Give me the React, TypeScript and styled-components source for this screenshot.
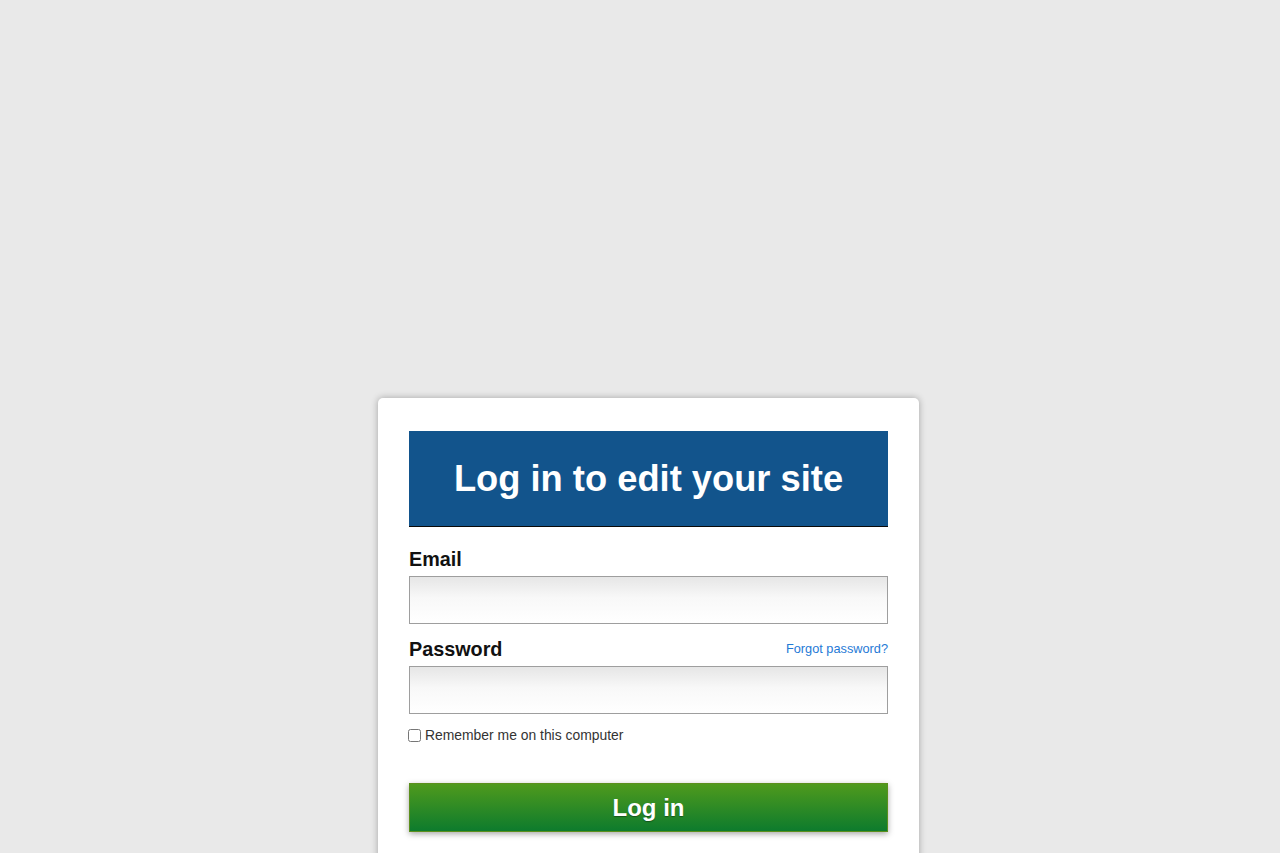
import React from "react";
import styled, { createGlobalStyle } from "styled-components";

const Global = createGlobalStyle`
  html, body { margin: 0; padding: 0; background: #e9e9e9; }
  body { font-family: "Liberation Sans", Arial, sans-serif; height: 853px; overflow: hidden; }
`;

const Page = styled.div`
  padding: 398px 0 0 17px;
  display: flex;
  justify-content: center;
`;

const Card = styled.div`
  width: 479px;
  background: #fff;
  border-radius: 5px;
  box-shadow: 0 0 7px rgba(0, 0, 0, 0.3);
  padding: 33px 31px 40px;
`;

const Header = styled.h1`
  margin: 0;
  height: 95px;
  background: #12548c;
  border-bottom: 1px solid #0a0a0a;
  color: #fff;
  font-size: 36.3px;
  font-weight: bold;
  display: flex;
  align-items: center;
  justify-content: center;
`;

const Form = styled.form`
  display: flex;
  flex-direction: column;
  padding-top: 21px;
`;

const LabelRow = styled.div`
  display: flex;
  justify-content: space-between;
  align-items: center;
  margin-bottom: 6px;
`;

const Label = styled.label`
  font-size: 19.8px;
  font-weight: bold;
  color: #111;
  line-height: 22px;
`;

const Link = styled.a`
  font-size: 12.75px;
  line-height: 14px;
  margin-top: -1px;
  color: #1f7ad6;
  text-decoration: none;
`;

const Input = styled.input<{ $gap: number }>`
  box-sizing: border-box;
  width: 100%;
  height: 48px;
  border: 1px solid #9e9e9e;
  background: linear-gradient(to bottom, #e6e6e6 0%, #f8f8f8 45%, #ffffff 100%);
  margin: 0 0 ${(p) => p.$gap}px;
  padding: 0 8px;
  font-size: 16px;
  outline: none;
`;

const CheckRow = styled.label`
  display: flex;
  align-items: center;
  gap: 4px;
  font-size: 13.9px;
  line-height: 16px;
  color: #333;
  margin-left: -1px;
`;

const Check = styled.input`
  width: 13px;
  height: 13px;
  margin: 0;
`;

const Button = styled.button`
  margin-top: 40px;
  height: 49px;
  border: 1px solid #5b8f1d;
  background: linear-gradient(to bottom, #4f9a1d 0%, #0d7b2d 100%);
  color: #fff;
  font-family: "Liberation Sans", Arial, sans-serif;
  font-size: 24px;
  font-weight: bold;
  text-shadow: 0 1px 1px rgba(0, 0, 0, 0.35);
  box-shadow: 0 2px 6px rgba(0, 0, 0, 0.35);
  cursor: pointer;
`;

export default function App() {
  return (
    <>
      <Global />
      <Page>
        <Card>
          <Header>Log in to edit your site</Header>
          <Form onSubmit={(e) => e.preventDefault()}>
            <LabelRow>
              <Label>Email</Label>
            </LabelRow>
            <Input type="email" $gap={14} />
            <LabelRow>
              <Label>Password</Label>
              <Link href="#">Forgot password?</Link>
            </LabelRow>
            <Input type="password" $gap={13} />
            <CheckRow>
              <Check type="checkbox" />
              Remember me on this computer
            </CheckRow>
            <Button type="submit">Log in</Button>
          </Form>
        </Card>
      </Page>
    </>
  );
}
